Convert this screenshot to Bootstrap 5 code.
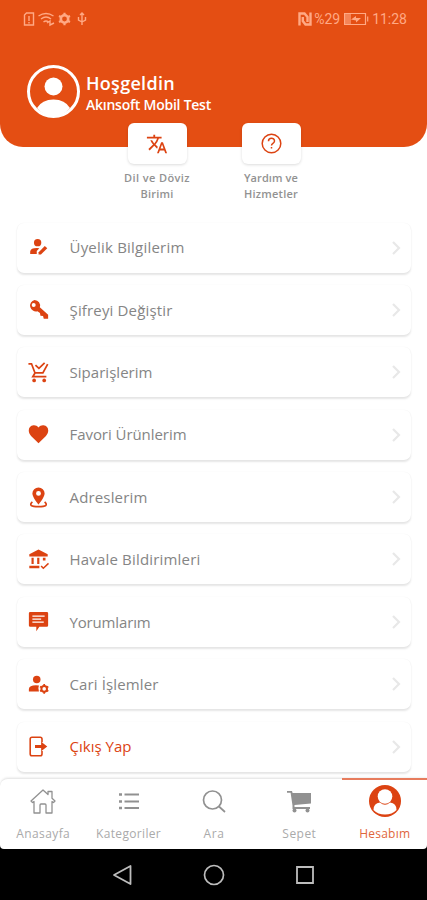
<!DOCTYPE html>
<html lang="tr">
<head>
<meta charset="utf-8">
<meta name="viewport" content="width=device-width, initial-scale=1">
<title>Hesabım</title>
<link href="https://cdn.jsdelivr.net/npm/bootstrap@5.3.0/dist/css/bootstrap.min.css" rel="stylesheet">
<style>
:root{--brand:#e44e13;--brand-ink:#dc4312}
body{font-family:"Open Sans","Noto Sans",sans-serif;background:#fff;color:#858585}
.screen{width:427px;height:900px}
svg{display:block;flex:none}
.hero{height:147px;background:var(--brand);border-radius:0 0 23px 23px}
.statusbar{height:37px;padding:0 20px 0 23px;color:#ffa985;font:14px/1 Roboto,sans-serif}
.statusbar .clock{margin-left:3px}
.statusbar .pct{margin-left:2px}
.profile{padding:28px 0 0 27px;gap:6px}
.hello{font-size:18px;line-height:21px;font-weight:600}
.user{font-size:14px;line-height:22px;font-weight:600}
.shortcuts{margin-top:-24px;height:99.5px;padding-left:1px}
.shortcut{width:114px;font-size:11px;line-height:16px;font-weight:600;color:#929292}
.tile{width:59px;height:41px;border-radius:6px;color:var(--brand-ink);box-shadow:0 1px 3px rgba(0,0,0,.14);margin-bottom:6px}
.menu{padding:0 16px 0 17px;height:555px}
.entry{height:50px;margin-bottom:12.4px;border-radius:7px;padding:0 10px 0 11px;box-shadow:0 1.5px 2px rgba(0,0,0,.1),0 0 1px rgba(0,0,0,.05);font-size:15px;background:#fff}
.entry .ico{color:var(--brand-ink);margin-right:20.500px}
.entry.exit{color:var(--brand-ink)}
.entry .arrow{color:#e8e8e8}
.tabs{height:71px;border-top:1px solid #e9e9e9;background:#fff;border-radius:8px 0 4px 4px;box-shadow:0 -1px 2px rgba(0,0,0,.06)}
.tab{width:85.4px;height:70px;font-size:12px;line-height:16px;color:#aaa;padding:6px 0 0 1px;border-top:2px solid transparent;margin-top:-1px}
.tab svg{color:#919191;margin-bottom:10px}
.tab.on{color:#df663c;border-color:#e77c5d}
.tab.on svg{color:var(--brand-ink)}
.bottom{background:linear-gradient(#fff 60px,#000 60px)}
.keys{height:51px;color:#bdbdbd;gap:70px}
</style>
<script defer src="https://cdn.jsdelivr.net/npm/bootstrap@5.3.0/dist/js/bootstrap.bundle.min.js"></script>
</head>
<body>
<main class="screen d-flex flex-column overflow-hidden">
<header class="hero flex-shrink-0">
 <div class="statusbar d-flex align-items-center">
  <svg width="66" height="16" viewBox="0 0 66 16" fill="none" stroke="currentColor" stroke-width="1.400"><path d="M3.500 2H10.500V14H1.500V4ZM6 5v5M6 11v1.500"/><path d="M15.500 5Q23 0 30.500 5M18 8Q23 4 28 8M20.500 11Q23 9 25.500 11M24 12l3-2v4l4-2"/><circle cx="41.500" cy="8" r="3.700" stroke-width="2.600"/><path stroke-width="2.200" d="M41.500 1.800v2M41.500 12.200v2M36 5l2 1M45 10l2 1M36 11l2-1M45 6l2-1"/><path d="M59 2v12M57 4l2-2 2 2M55.500 6v3l3.500 2M62.500 6v3L59 11"/></svg>
  <div class="ms-auto d-flex align-items-center">
   <svg width="14" height="14" viewBox="0 0 14 14" fill="none" stroke="currentColor" stroke-width="2.400"><path d="M1.500 13.500V1.500H6.500L9.500 5V10M12.500.5V12.500H7.500L4.800 9V5"/></svg>
   <span class="pct">%29</span>
   <svg class="ms-1" width="25" height="12" viewBox="0 0 25 12" fill="none" stroke="currentColor"><path d="M.5.500H21.500V11.500H.5ZM23.700 3.500v5" stroke-width="1.200"/><path d="M1 1h6v10H1Z" fill="currentColor" stroke="none" opacity=".6"/><path fill="currentColor" d="M7 6.500l5-3.500v2h5L12 9.500V7.500Z" stroke="none"/></svg>
   <span class="clock">11:28</span>
  </div>
 </div>
 <div class="profile d-flex text-white">
  <svg width="53" height="53" viewBox="0 0 53 53"><circle cx="26.500" cy="26.500" r="25" fill="none" stroke="#fff" stroke-width="3"/><circle cx="26.500" cy="21.500" r="9" fill="#fff"/><path fill="#fff" d="M10 43Q15 34.500 26.500 34.500T43 43Q36 51 26.500 51T10 43Z"/></svg>
  <div class="pt-2"><div class="hello"><span class="fit" data-w="89">Hoşgeldin</span></div><div class="user"><span class="fit" data-w="125">Akınsoft Mobil Test</span></div></div>
 </div>
</header>
<section class="shortcuts d-flex justify-content-center text-center flex-shrink-0">
 <div class="shortcut d-flex flex-column align-items-center">
  <div class="tile bg-white d-flex align-items-center justify-content-center"><svg width="22" height="22" viewBox="0 0 24 24" fill="currentColor"><path d="M12.870 15.070l-2.540-2.510.03-.03A17.500 17.500 0 0014.070 6H17V4h-7V2H8v2H1v2h11.170C11.500 7.920 10.440 9.750 9 11.350 8.070 10.320 7.300 9.190 6.690 8h-2c.73 1.630 1.730 3.170 2.980 4.560l-5.090 5.020L4 19l5-5 3.110 3.110.76-2.040zM18.500 10h-2L12 22h2l1.120-3h4.750L21 22h2l-4.500-12zm-2.620 7l1.620-4.330L19.120 17h-3.240z"/></svg></div>
  <div class="fit" data-w="66">Dil ve Döviz</div><div class="fit" data-w="33">Birimi</div>
 </div>
 <div class="shortcut d-flex flex-column align-items-center">
  <div class="tile bg-white d-flex align-items-center justify-content-center"><svg width="21" height="21" viewBox="0 0 21 21" fill="none" stroke="currentColor" stroke-width="1.500"><circle cx="10.500" cy="10.500" r="9.300"/><path d="M7.500 8.200C7.500 4.300 13.500 4.300 13.500 8c0 2.500-3 2.200-3 4.500M10.500 14v1.600"/></svg></div>
  <div class="fit" data-w="54">Yardım ve</div><div class="fit" data-w="54">Hizmetler</div>
 </div>
</section>
<section class="menu flex-shrink-0 pt-0" id="menu"></section>
<footer class="bottom mt-auto flex-shrink-0">
 <nav class="tabs d-flex">
  <div class="tab d-flex flex-column align-items-center"><svg width="28" height="30" viewBox="0 0 28 30" fill="none" stroke="currentColor" stroke-width="1.300" stroke-linejoin="round"><path d="M2 15 14 4l5 4.600V5.500h4v6.700L26 15l-1.500 1.500-1.500-1V27h-6v-8q0-1-1-1h-4q-1 0-1 1v8H5V15.500l-1.500 1Z"/></svg><span class="fit" data-w="54">Anasayfa</span></div>
  <div class="tab d-flex flex-column align-items-center"><svg width="22" height="30" viewBox="0 0 22 30" fill="none" stroke="currentColor" stroke-width="2"><path d="M1 8.500h3M1 15.500h3M1 22h3" stroke-width="2.500"/><path d="M6.500 8.500H21M6.500 15.500H21M6.500 22H21"/></svg><span class="fit" data-w="65">Kategoriler</span></div>
  <div class="tab d-flex flex-column align-items-center"><svg width="26" height="30" viewBox="0 0 26 30" fill="none" stroke="currentColor" stroke-width="1.700"><circle cx="11.500" cy="14" r="9"/><path d="m18 20.500 6 5.500"/></svg><span class="fit" data-w="21">Ara</span></div>
  <div class="tab d-flex flex-column align-items-center"><svg width="26" height="30" viewBox="0 0 26 30" fill="currentColor"><path d="M1 5h5l.6 2H25v10.500L8.500 19v2H24v2H6.500v-3.500L4.600 6.700H1Z"/><circle cx="8.500" cy="24.500" r="2"/><circle cx="21.500" cy="24.500" r="2"/></svg><span class="fit" data-w="34">Sepet</span></div>
  <div class="tab on d-flex flex-column align-items-center"><svg width="32" height="30" viewBox="0 0 32 30" overflow="visible"><circle cx="16" cy="15" r="16" fill="currentColor"/><circle cx="16" cy="10.500" r="7.300" fill="#fff"/><path fill="#fff" d="M4.500 24q0-7 6.500-7.500 5 4.500 10 0 6.500.5 6.500 7.500-4.500 4.500-11.500 4.500T4.500 24Z"/></svg><span class="fit" data-w="51">Hesabım</span></div>
 </nav>
 <div class="keys d-flex align-items-center justify-content-center">
  <svg width="21" height="22" viewBox="0 0 21 22" fill="none" stroke="currentColor" stroke-width="1.800" stroke-linejoin="round"><path d="M18.500 2v18L2 11Z"/></svg>
  <svg width="22" height="22" viewBox="0 0 22 22" fill="none" stroke="currentColor" stroke-width="1.700"><circle cx="11" cy="11" r="9.500"/></svg>
  <svg width="20" height="20" viewBox="0 0 20 20" fill="none" stroke="currentColor" stroke-width="1.800"><path d="M2 2h16v16H2Z"/></svg>
 </div>
</footer>
</main>
<script>
const entries=[
["Üyelik Bilgilerim",115,'<circle cx="11" cy="6.500" r="4.200"/><path d="M2.500 19.500v-3Q3 12 13 12.800L10 16v3.500Z"/><path d="m12 20 .2-2.700 7-7L22 12.800 14.800 20Z"/>'],
["Şifreyi Değiştir",103,'<path fill-rule="evenodd" d="M7.500 1a6.500 6.500 0 0 1 6 8.500L23 18v4.500h-5l-.8-3-3-.5-.5-3-3-2A6.500 6.500 0 1 1 7.500 1ZM6.500 4.500a2.300 2.300 0 1 0 0 4.600 2.300 2.300 0 0 0 0-4.600Z"/>'],
["Siparişlerim",83,'<path fill="none" stroke="currentColor" stroke-width="2" d="M.5 2H4l4 10.500h9L22.500 2.500M8 12.500l-2.500 4.300H21M8.500 3.500l4 3.700L19 1"/><circle cx="7" cy="21" r="2.100"/><circle cx="18.500" cy="21" r="2.100"/>'],
["Favori Ürünlerim",117,'<path d="M12 22 3.500 13.700C-1 9 .5 2 6.300 1.500 8.500 1.300 10.500 2.200 12 4c1.500-1.800 3.500-2.700 5.700-2.500C23.500 2 25 9 20.500 13.700Z"/>'],
["Adreslerim",78,'<path fill-rule="evenodd" d="M12 .5a7 7 0 0 1 7 7C19 12 12 20 12 20S5 12 5 7.500a7 7 0 0 1 7-7Zm0 4a2.800 2.800 0 1 0 0 5.600 2.800 2.800 0 0 0 0-5.600Z"/><path fill="none" stroke="currentColor" stroke-width="1.900" d="M5 17Q-1 22.500 12 22.500T19 17"/>'],
["Havale Bildirimleri",131,'<path d="M12 .5 22.500 6v2.500h-21V6ZM4 10h2.500v7H4ZM10.500 10H13v7h-2.500ZM1.500 19H13v3H1.500ZM17 10h3v3h-3Z"/><path fill="none" stroke="currentColor" stroke-width="1.800" d="m15 19.500 2.500 2.500 6-5.500"/>'],
["Yorumlarım",81,'<path fill-rule="evenodd" d="M2.500 1h19q1.500 0 1.500 1.500v14q0 1.500-1.500 1.500H13l-3.500 5V18h-7Q1 18 1 16.500v-14Q1 1 2.500 1ZM5 5v1.500h14V5ZM5 8.500V10h10V8.500ZM5 12v1.500h13V12Z"/>'],
["Cari İşlemler",89,'<circle cx="10" cy="6.200" r="4.300"/><path d="M1 20v-3q.500-5 11.500-4-1.500 3 0 7Z"/><circle cx="18.500" cy="17" r="3.200" fill="none" stroke="currentColor" stroke-width="2.300"/><path stroke="currentColor" stroke-width="2" d="M18.500 11.500v2M18.500 20.500v2M13.800 14.300l1.500.9M21.700 18.800l1.500.9M13.800 19.700l1.500-.9M21.700 15.200l1.500-.9"/>'],
["Çıkış Yap",62,'<path fill="none" stroke="currentColor" stroke-width="1.800" d="M16 7V3.500Q16 1.500 14 1.500H4.500q-2 0-2 2v17q0 2 2 2H14q2 0 2-2V17"/><path d="M8 10.200h7V6.500l7 5.500-7 5.500v-3.700H8Z"/>']];
document.getElementById("menu").innerHTML=entries.map(([t,w,p],i)=>`<div class="entry d-flex align-items-center ${i===8?'exit':''}"><svg class="ico" width="21" height="21" viewBox="0 0 24 24" fill="currentColor">${p}</svg><span class="fit" data-w="${w}">${t}</span><svg class="arrow ms-auto" width="10" height="14" viewBox="0 0 10 14" fill="none" stroke="currentColor" stroke-width="2.200"><path d="m2 1 6 6-6 6"/></svg></div>`).join("");
// Track each label so that it fills its intended width.
document.querySelectorAll(".fit").forEach(e=>{
 const r=document.createRange();r.selectNodeContents(e);
 e.style.letterSpacing="0px";
 const d=(e.dataset.w-r.getBoundingClientRect().width)/e.textContent.length;
 e.style.letterSpacing=d.toFixed(3)+"px";
});
</script>
</body>
</html>
